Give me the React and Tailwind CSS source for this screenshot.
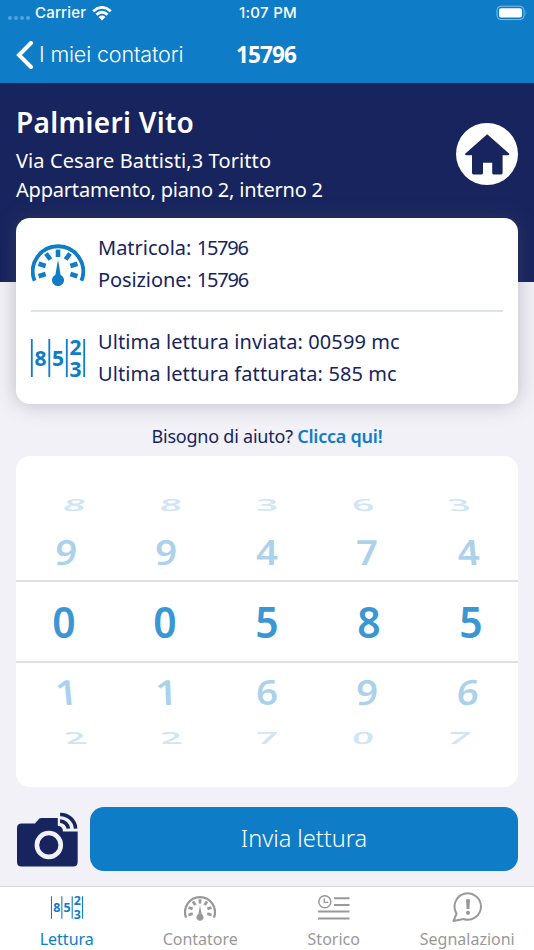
import { useState } from "react"

const wheelRows = [
  {
    digits: ["8", "8", "3", "6", "3"],
    className: "w-[480px] mt-[22px] h-[52px] text-[#0e7cc6]/20",
    cells: ["scale-x-90 scale-y-[0.39] -skew-x-[8deg]", "scale-x-90 scale-y-[0.39] -skew-x-[4deg]", "scale-x-90 scale-y-[0.39]", "scale-x-90 scale-y-[0.39] skew-x-[4deg]", "scale-x-90 scale-y-[0.39] skew-x-[8deg]"],
  },
  {
    digits: ["9", "9", "4", "7", "4"],
    className: "w-[502px] h-[40px] text-[#0e7cc6]/35",
    cells: ["scale-x-90 scale-y-[0.81] -skew-x-[5deg]", "scale-x-90 scale-y-[0.81] -skew-x-[2deg]", "scale-x-90 scale-y-[0.81]", "scale-x-90 scale-y-[0.81] skew-x-[2deg]", "scale-x-90 scale-y-[0.81] skew-x-[5deg]"],
  },
  {
    digits: ["0", "0", "5", "8", "5"],
    className: "w-[509px] mt-[10px] pb-px h-[83px] text-[#3b97d3]",
    cells: ["scale-x-95", "scale-x-95", "scale-x-95", "scale-x-95", "scale-x-95"],
  },
  {
    digits: ["1", "1", "6", "9", "6"],
    className: "w-[502px] mt-[7px] h-[41px] text-[#0e7cc6]/35",
    cells: ["scale-x-90 scale-y-[0.81] skew-x-[5deg]", "scale-x-90 scale-y-[0.81] skew-x-[2deg]", "scale-x-90 scale-y-[0.81]", "scale-x-90 scale-y-[0.81] -skew-x-[2deg]", "scale-x-90 scale-y-[0.81] -skew-x-[5deg]"],
  },
  {
    digits: ["2", "2", "7", "0", "7"],
    className: "w-[480px] h-[52px] text-[#0e7cc6]/20",
    cells: ["scale-x-90 scale-y-[0.39] skew-x-[8deg]", "scale-x-90 scale-y-[0.39] skew-x-[4deg]", "scale-x-90 scale-y-[0.39]", "scale-x-90 scale-y-[0.39] -skew-x-[4deg]", "scale-x-90 scale-y-[0.39] -skew-x-[8deg]"],
  },
]

function GaugeIcon({ className }) {
  return (
    <svg viewBox="0 0 54 43" className={className} fill="none" stroke="currentColor">
      <path d="M3.6 37.8A25.2 25.2 0 1 1 50.4 37.8" strokeWidth="3.8" />
      {[-108, -72, -36, 0, 36, 72, 108].map((angle) => (
        <path key={angle} d="M27 6.6v7.4" strokeWidth="4.6" transform={`rotate(${angle} 27 27)`} />
      ))}
      <path d="M27 16.5L29.6 31.7A6 6 0 1 1 24.4 31.7Z" fill="currentColor" stroke="none" />
    </svg>
  )
}

function CounterIcon({ className }) {
  return (
    <svg viewBox="0 0 54 38" className={`overflow-visible ${className}`} fill="currentColor">
      <path d="M.8 0V38M18.3 0V38M35.8 0V38M53.2 0V38" stroke="currentColor" strokeWidth="1.8" />
      <g fontFamily="Noto Sans, sans-serif" fontWeight="700" fontSize="21" textAnchor="middle">
        <text x="9.6" y="26.7">8</text>
        <text x="27.1" y="26.7">5</text>
        <text x="44.6" y="15.6">2</text>
        <text x="44.6" y="37.6">3</text>
      </g>
    </svg>
  )
}

function HouseIcon() {
  return (
    <svg viewBox="0 0 62 62" className="size-[62px] shrink-0">
      <circle cx="31" cy="31" r="31" fill="#fff" />
      <path
        d="M31.2 11.2L53 30.6Q54 32.2 52 32.2H46.6V50Q46.6 51.4 45.2 51.4H37.6Q36.2 51.4 36.2 50V39.7H27V50Q27 51.4 25.6 51.4H17.4Q16 51.4 16 50V32.2H10.2Q8.4 32.2 9.4 30.6Z"
        fill="#17245e"
      />
    </svg>
  )
}

function CameraIcon() {
  return (
    <svg viewBox="52 49 184 165" className="w-[61px] h-[55px] shrink-0">
      <path
        d="M66 83H106L119 69Q121 67 125 67H175V90Q190 92 191 107H235V199Q235 213 221 213H66Q52 213 52 199V97Q52 83 66 83Z"
        fill="#17245e"
      />
      <circle cx="148" cy="148" r="36" fill="none" stroke="#f2f1f7" strokeWidth="14" />
      <path d="M182 76A25 25 0 0 1 207 99M182 56A46 46 0 0 1 229 99" fill="none" stroke="#17245e" strokeWidth="11" />
    </svg>
  )
}

function HistoryIcon({ className }) {
  return (
    <svg viewBox="0 0 32 25" className={className} fill="none" stroke="currentColor" strokeWidth="2">
      <circle cx="6.8" cy="6.8" r="6" strokeWidth="1.5" />
      <path d="M6.3 3.2V7.4H10.3" strokeWidth="1.3" />
      <path d="M16 3.2H31.5M16 10H31.5M0 16.6H31.5M0 23.4H31.5" />
    </svg>
  )
}

function AlertIcon({ className }) {
  return (
    <svg viewBox="0 0 30 31" className={className} fill="none" stroke="currentColor" strokeWidth="2">
      <path d="M4.6 21.6A13.2 13.2 0 1 1 11.4 27L1.5 29Z" strokeLinejoin="round" />
      <path d="M14 7.2H18L17.5 17H14.5Z" fill="currentColor" stroke="none" />
      <circle cx="16" cy="20.8" r="2.1" fill="currentColor" stroke="none" />
    </svg>
  )
}

const tabs = [
  { label: "Lettura", Icon: CounterIcon, size: "w-8 h-[23px]" },
  { label: "Contatore", Icon: GaugeIcon, size: "w-8 h-[26px]" },
  { label: "Storico", Icon: HistoryIcon, size: "w-8 h-[25px]" },
  { label: "Segnalazioni", Icon: AlertIcon, size: "w-[30px] h-[31px]" },
]

function StatusBar() {
  return (
    <div className="grid grid-cols-3 items-center h-[27px] pl-2 pr-1.5 font-['Inter'] text-[15px] font-medium">
      <div className="flex items-center">
        <div className="flex gap-0.5 mt-2 mr-[5px]">
          {[0, 1, 2, 3].map((dot) => (
            <span key={dot} className="size-1 rounded-full bg-white/30" />
          ))}
        </div>
        <span className="tracking-[0.2px]">Carrier</span>
        <svg viewBox="0 0 20 15" className="ml-1.5 w-5 h-[15px]" fill="none" stroke="#fff" strokeWidth="2.8">
          <path d="M1.2 5.2Q10-2.4 18.8 5.2M4.4 8.6Q10 3.8 15.6 8.6" />
          <path d="M6.6 10.9Q10 8 13.4 10.9L10 14.4Z" fill="#fff" stroke="none" />
        </svg>
      </div>
      <div className="text-center tracking-[0.3px]">1:07 PM</div>
      <svg viewBox="0 0 32 16" className="justify-self-end -mt-0.5 w-8 h-4" fill="none">
        <rect x="1" y="1.2" width="27" height="13.4" rx="4" stroke="#fff" strokeOpacity=".5" />
        <rect x="3" y="3.2" width="23" height="9.4" rx="2" fill="#fff" />
        <path d="M29.6 6Q31.2 8 29.6 10Z" fill="#fff" fillOpacity=".5" />
      </svg>
    </div>
  )
}

export default function App() {
  const [activeTab, setActiveTab] = useState("Lettura")

  return (
    <div className="flex flex-col w-[534px] h-[950px] overflow-hidden bg-[#f2f1f7] font-['Noto_Sans',sans-serif] text-[#17245e]">
      <header className="h-[83px] shrink-0 bg-[#0e7cc6] text-white">
        <StatusBar />
        <div className="grid grid-cols-3 items-center h-14 pl-4">
          <button className="flex items-center pb-px whitespace-nowrap font-['Inter'] text-[21.5px] tracking-[-0.15px] font-[350]">
            <svg viewBox="0 0 18 28" className="w-[18px] h-7 mr-[5px]" fill="none" stroke="#fff" strokeWidth="4">
              <path d="M15 2L3 14L15 26" strokeLinecap="round" />
            </svg>
            I miei contatori
          </button>
          <h1 className="pr-[18px] text-center text-[22.5px] font-bold tracking-[-0.9px]">15796</h1>
        </div>
      </header>

      <section className="flex justify-between h-[199px] shrink-0 px-4 bg-[#17245e] text-white">
        <div className="pt-[19px]">
          <h2 className="text-[28px] leading-10 font-semibold tracking-[0.3px]">Palmieri Vito</h2>
          <p className="mt-1 text-[20px] leading-[29px]">
            <span className="tracking-[0.1px]">Via Cesare Battisti,3 Toritto</span>
            <br />
            <span className="tracking-[-0.2px]">Appartamento, piano 2, interno 2</span>
          </p>
        </div>
        <div className="pt-10">
          <HouseIcon />
        </div>
      </section>

      <section className="relative -mt-16 mx-4 h-[186px] shrink-0 px-[15px] rounded-[14px] bg-white shadow-[0_0_20px_rgba(90,90,100,0.35)] text-[20px] leading-8">
        <div className="flex items-center gap-[13px] h-[94px] border-b-2 border-[#dfe4ea]">
          <GaugeIcon className="w-[54px] h-[43px] text-[#0e7cc6]" />
          <div>
            <p>Matricola: <span className="tracking-[-1.2px]">15796</span></p>
            <p className="tracking-[-0.1px]">Posizione: <span className="tracking-[-1.2px]">15796</span></p>
          </div>
        </div>
        <div className="flex items-center gap-[13px] h-[92px]">
          <CounterIcon className="w-[54px] h-[38px] text-[#0e7cc6]" />
          <div className="tracking-[0.1px]">
            <p>Ultima lettura inviata: 00599 mc</p>
            <p>Ultima lettura fatturata: 585 mc</p>
          </div>
        </div>
      </section>

      <p className="mt-5 shrink-0 text-center text-[18px] leading-6 tracking-[-0.23px]">
        Bisogno di aiuto? <a className="font-semibold text-[#0e7cc6]">Clicca qui!</a>
      </p>

      <section className="flex flex-col items-center mx-4 mt-2 h-[331px] shrink-0 overflow-hidden rounded-[14px] bg-white text-[43px] leading-none font-semibold">
        {wheelRows.map((row, i) => (
          <div key={i} className={`grid grid-cols-5 items-center shrink-0 text-center ${row.className} ${i === 2 ? "border-y-2 border-[#e0e0e2]" : ""}`}>
            {row.digits.map((digit, j) => (
              <span key={j} className={row.cells[j]}>
                {digit}
              </span>
            ))}
          </div>
        ))}
      </section>

      <div className="flex items-center gap-3 mt-5 ml-[17px] mr-4 h-16 shrink-0">
        <CameraIcon />
        <button className="grow h-16 rounded-[14px] bg-[#0e7cc6] text-[23.5px] font-light text-white">Invia lettura</button>
      </div>

      <nav className="grid grid-cols-4 mt-[15px] h-16 shrink-0 border-t border-[#d5d5d8] bg-white">
        {tabs.map(({ label, Icon, size }) => (
          <button
            key={label}
            onClick={() => setActiveTab(label)}
            className={`flex flex-col items-center ${activeTab === label ? "text-[#0e7cc6]" : "text-[#999]"}`}
          >
            <span className="flex items-center justify-center h-[41px]">
              <Icon className={size} />
            </span>
            <span className="text-[16px] leading-[22px]">{label}</span>
          </button>
        ))}
      </nav>
    </div>
  )
}
